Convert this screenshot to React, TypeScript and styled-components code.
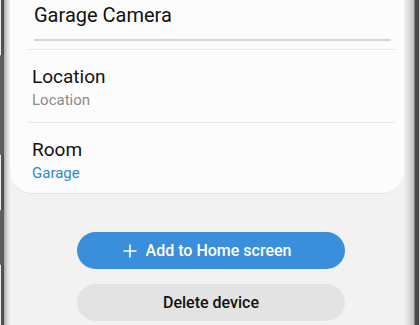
import styled, { createGlobalStyle } from "styled-components";

const GlobalStyle = createGlobalStyle`
  html, body {
    margin: 0;
    padding: 0;
    background: #ececec;
  }
  body {
    font-family: Roboto, "Noto Sans", "Liberation Sans", sans-serif;
    -webkit-font-smoothing: antialiased;
  }
`;

export default function App() {
  return (
    <>
      <GlobalStyle />
      <Phone>
        <LeftBezel>
          <SideKey $top={55} $height={100} />
          <SideKey $top={210} $height={55} />
        </LeftBezel>
        <Screen>
          <Card>
            <NameField>Garage Camera</NameField>
            <Divider />
            <Row>
              <RowTitle>Location</RowTitle>
              <RowValue>Location</RowValue>
            </Row>
            <Divider />
            <Row>
              <RowTitle>Room</RowTitle>
              <RowValue $accent>Garage</RowValue>
            </Row>
          </Card>
          <Actions>
            <PillButton $primary type="button">
              <PlusIcon viewBox="0 0 14 14">
                <path d="M7 0.5v13M0.5 7h13" />
              </PlusIcon>
              Add to Home screen
            </PillButton>
            <PillButton type="button">Delete device</PillButton>
          </Actions>
        </Screen>
        <RightBezel />
      </Phone>
    </>
  );
}

const Phone = styled.div`
  display: flex;
  width: 420px;
  height: 325px;
  overflow: hidden;
`;

const LeftBezel = styled.div`
  position: relative;
  width: 10px;
  flex-shrink: 0;
  background: linear-gradient(
    to right,
    #e9e9e9 0px,
    #e9e9e9 1px,
    #55555b 1px,
    #4a4a50 4px,
    #a8a8a8 4px,
    #d6d6d6 7px,
    #f0f0f0 10px
  );
`;

const SideKey = styled.div<{ $top: number; $height: number }>`
  position: absolute;
  left: 0;
  top: ${(p) => p.$top}px;
  width: 4px;
  height: ${(p) => p.$height}px;
  background: #5c5c62;
  border-radius: 1px;
`;

const RightBezel = styled.div`
  width: 16px;
  flex-shrink: 0;
  background: linear-gradient(
    to right,
    #f0f0f0 0px,
    #d8d8d8 6px,
    #bdbdbd 10px,
    #4b4b51 11px,
    #45454b 15px,
    #dcdcdc 15px
  );
`;

const Screen = styled.div`
  flex: 1;
  display: flex;
  flex-direction: column;
  background: #f2f2f2;
`;

const Card = styled.div`
  background: #fcfcfc;
  border-radius: 0 0 22px 22px;
  border-bottom: 1px solid #e3e3e3;
  padding-top: 3px;
`;

const NameField = styled.div`
  margin: 0 13px 8px 24px;
  padding-bottom: 12px;
  border-bottom: 2px solid #d2d2d2;
  font-size: 20px;
  line-height: 24px;
  color: #111;
`;

const Divider = styled.div`
  height: 1px;
  margin: 0 9px 0 18px;
  background: #e6e6e6;
`;

const Row = styled.div`
  display: flex;
  flex-direction: column;
  gap: 2px;
  padding: 15px 22px 13px;

  &:last-child {
    padding-bottom: 11px;
  }
`;

const RowTitle = styled.div`
  font-size: 19px;
  line-height: 24px;
  color: #111;
`;

const RowValue = styled.div<{ $accent?: boolean }>`
  font-size: 15px;
  line-height: 18px;
  color: ${(p) => (p.$accent ? "#2d87d6" : "#8b8b8b")};
`;

const Actions = styled.div`
  display: flex;
  flex-direction: column;
  align-items: center;
  gap: 15px;
  margin: 38px 0 0 8px;
`;

const PillButton = styled.button<{ $primary?: boolean }>`
  display: flex;
  align-items: center;
  justify-content: center;
  gap: 9px;
  width: 268px;
  height: 37px;
  border: none;
  border-radius: 19px;
  padding: 0 ${(p) => (p.$primary ? "8px" : "0")} 0 0;
  font-family: Roboto, "Noto Sans", "Liberation Sans", sans-serif;
  font-size: 16px;
  font-weight: 500;
  background: ${(p) => (p.$primary ? "#3a8fdd" : "#e3e3e3")};
  color: ${(p) => (p.$primary ? "#ffffff" : "#111111")};
`;

const PlusIcon = styled.svg`
  width: 14px;
  height: 14px;
  fill: none;
  stroke: #ffffff;
  stroke-width: 1.6;
`;
